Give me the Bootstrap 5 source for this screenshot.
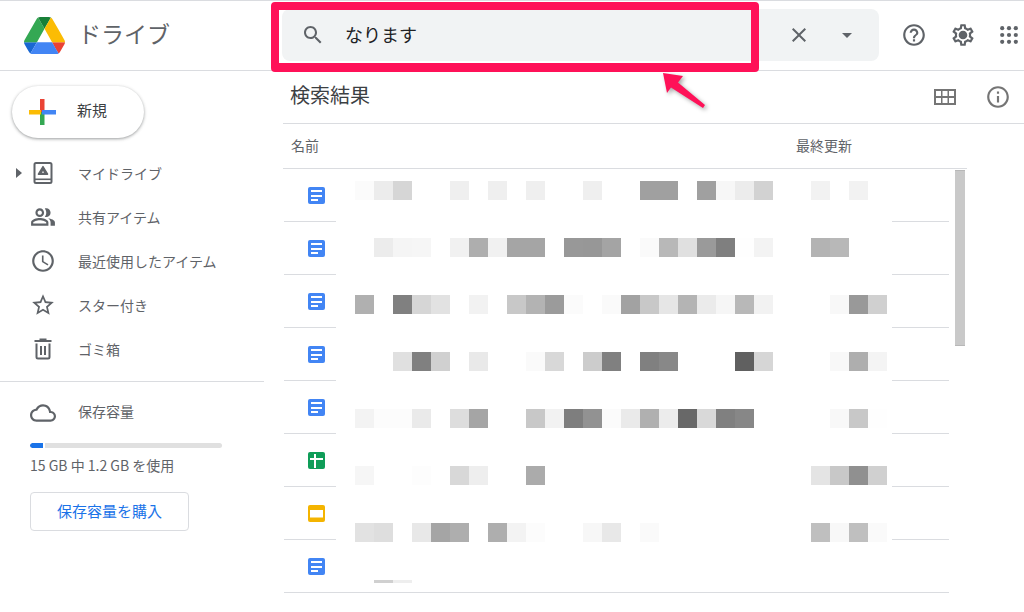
<!DOCTYPE html>
<html lang="ja">
<head>
  <meta charset="UTF-8" />
  <meta name="viewport" content="width=device-width, initial-scale=1.0"/>
  <title>ドライブ</title>
  <link href="https://cdn.jsdelivr.net/npm/bootstrap@5.3.0/dist/css/bootstrap.min.css" rel="stylesheet">
  <style>
    body { font-family: "Noto Sans CJK JP", "Liberation Sans", sans-serif; color: #5f6368; background: #fff; height: 612px; overflow: hidden; }
    svg { display: block; flex: none; }
    .ico { fill: #5f6368; }

    /* header */
    .top-bar { height: 71px; border-top: 1px solid #dadce0; border-bottom: 1px solid #dadce0; }
    .brand { width: 282px; padding-left: 24px; }
    .brand-name { font-size: 23px; margin: 0 0 4px 13px; line-height: 1; }
    .search-box { width: 597px; height: 52px; margin-bottom: 1px; background: #f1f3f4; border-radius: 8px; padding-left: 19px; }
    .search-text { font-size: 18px; color: #202124; margin: 0 0 3px 20px; line-height: 1; }
    .search-clear { margin-left: 370px; }
    .search-drop { margin-left: 24px; }
    .head-help { margin: 0 0 1px 22px; }
    .head-gear { margin: 0 0 1px 23px; }
    .head-apps { margin: 0 0 1px 24px; }

    /* sidebar */
    .side { width: 283px; flex: none; }
    .new-btn { width: 132px; height: 52px; margin: 15px 0 13px 12px; border-radius: 26px; padding-left: 16px; background: #fff; box-shadow: 0 1px 3px 1px rgba(60,64,67,.2), 0 1px 2px rgba(60,64,67,.25); font-size: 15px; color: #3c4043; }
    .new-btn span { margin: 0 0 3px 21px; }
    .side-row { height: 44px; font-size: 14px; position: relative; padding-left: 31px; }
    .side-row span { margin-left: 23px; }
    .side-row .wide-ico { margin: 0 -1px; }
    .tree-caret { position: absolute; left: 16px; top: 17px; width: 0; height: 0; border-left: 6px solid #5f6368; border-top: 5px solid transparent; border-bottom: 5px solid transparent; }
    .side-sep { width: 264px; margin-top: 10px; border-top: 1px solid #dadce0; }
    .store { padding: 18px 0 0 30px; font-size: 14px; }
    .store-title span { margin: 0 0 4px 22px; }
    .store-bar { width: 192px; height: 5px; margin-top: 17px; background: #e0e0e0; border-radius: 3px; overflow: hidden; }
    .store-fill { width: 15px; height: 100%; background: #1a73e8; border-right: 2px solid #fff; border-radius: 3px 0 0 3px; }
    .store-used { line-height: 20px; margin-top: 7px; }
    .buy-btn { width: 159px; height: 39px; margin-top: 17px; border: 1px solid #dadce0; border-radius: 4px; color: #1a73e8; font-size: 15px; padding: 0; background: #fff; }

    /* results */
    .results { width: 741px; flex: none; }
    .title-row { height: 53px; border-bottom: 1px solid #dadce0; padding-left: 7px; }
    .title-row h1 { font-size: 20px; font-weight: 400; color: #3c4043; margin: 0 0 4px; line-height: 1; }
    .grid-view { margin-left: 564px; }
    .info-btn { margin-left: 29px; }
    .col-row { width: 684px; height: 45px; border-bottom: 1px solid #dadce0; padding: 0 0 2px 8px; font-size: 14px; }
    .col-name { width: 505px; }
    .file-list { width: 666px; padding-left: 1px; }
    .file-row { height: 53px; border-bottom: 1px solid #dadce0; padding: 1px 0 0 24px; }
    .thumb { width: 10px; height: 176px; margin: 1px 0 0 6px; background: #c9c9c9; border-top: 1px solid #b8b8b8; border-bottom: 1px solid #b8b8b8; }
    .blur-cover { position: absolute; left: 53px; top: 0; width: 556px; height: 423px; background: #fff; padding: 12px 0 0 19px; display: grid; grid-template-columns: repeat(28, 19px); grid-template-rows: repeat(7, 19px) 3px; row-gap: 38px; }

    /* annotation */
    .mark-box { position: absolute; left: 271px; top: 2px; width: 488px; height: 70px; border: solid #ff1158; border-width: 8px 8px 9px; border-radius: 4px; }
    .mark-arrow { position: absolute; left: 655px; top: 68px; filter: drop-shadow(2px 2px 2px rgba(0,0,0,.35)); }
  </style>
</head>
<body class="position-relative">
  <header class="top-bar d-flex align-items-center">
    <div class="brand d-flex align-items-center">
      <svg width="41" height="37" viewBox="0 0 87.3 78" preserveAspectRatio="none">
        <path d="m6.6 66.85 3.85 6.65c.8 1.4 1.95 2.5 3.3 3.3l13.75-23.8h-27.5c0 1.55.4 3.1 1.2 4.5z" fill="#1967d2"/>
        <path d="m43.65 25-13.75-23.8c-1.35.8-2.5 1.9-3.3 3.3l-25.4 44a9.06 9.06 0 0 0 -1.2 4.5h27.5z" fill="#34a853"/>
        <path d="m73.55 76.8c1.35-.8 2.5-1.9 3.3-3.3l1.6-2.75 7.65-13.25c.8-1.4 1.2-2.95 1.2-4.5h-27.502l5.852 11.5z" fill="#ea4335"/>
        <path d="m43.65 25 13.75-23.8c-1.35-.8-2.9-1.2-4.5-1.2h-18.5c-1.6 0-3.15.45-4.5 1.2z" fill="#188038"/>
        <path d="m59.8 53h-32.3l-13.75 23.8c1.35.8 2.9 1.2 4.5 1.2h50.8c1.6 0 3.15-.45 4.5-1.2z" fill="#4285f4"/>
        <path d="m73.4 26.5-12.7-22c-.8-1.4-1.95-2.5-3.3-3.3l-13.75 23.8 16.15 28h27.45c0-1.55-.4-3.1-1.2-4.5z" fill="#fbbc04"/>
      </svg>
      <span class="brand-name">ドライブ</span>
    </div>
    <div class="search-box d-flex align-items-center">
      <svg class="ico" width="24" height="24" viewBox="0 0 24 24"><path d="M15.5 14h-.79l-.28-.27C15.41 12.59 16 11.11 16 9.5 16 5.91 13.09 3 9.5 3S3 5.91 3 9.5 5.91 16 9.5 16c1.61 0 3.09-.59 4.23-1.57l.27.28v.79l5 4.99L20.49 19l-4.99-5zm-6 0C7.01 14 5 11.99 5 9.5S7.01 5 9.5 5 14 7.01 14 9.5 11.99 14 9.5 14z"/></svg>
      <span class="search-text">なります</span>
      <svg class="ico search-clear" width="24" height="24" viewBox="0 0 24 24"><path d="M19 6.41L17.59 5 12 10.59 6.41 5 5 6.41 10.59 12 5 17.59 6.41 19 12 13.41 17.59 19 19 17.59 13.41 12z"/></svg>
      <svg class="ico search-drop" width="24" height="24" viewBox="0 0 24 24"><path d="M7 10l5 5 5-5z"/></svg>
    </div>
    <svg class="ico head-help" width="26" height="26" viewBox="0 0 24 24"><path d="M11 18h2v-2h-2v2zm1-16C6.48 2 2 6.48 2 12s4.48 10 10 10 10-4.48 10-10S17.52 2 12 2zm0 18c-4.41 0-8-3.59-8-8s3.59-8 8-8 8 3.59 8 8-3.59 8-8 8zm0-14c-2.21 0-4 1.79-4 4h2c0-1.1.9-2 2-2s2 .9 2 2c0 2-3 1.75-3 5h2c0-2.25 3-2.5 3-5 0-2.21-1.79-4-4-4z"/></svg>
    <svg class="ico head-gear" width="26" height="26" viewBox="0 0 24 24"><path d="M19.43 12.98c.04-.32.07-.64.07-.98 0-.34-.03-.66-.07-.98l2.11-1.65c.19-.15.24-.42.12-.64l-2-3.46c-.09-.16-.26-.25-.44-.25-.06 0-.12.01-.17.03l-2.49 1c-.52-.4-1.08-.73-1.69-.98l-.38-2.65C14.46 2.18 14.25 2 14 2h-4c-.25 0-.46.18-.49.42l-.38 2.65c-.61.25-1.17.59-1.69.98l-2.49-1c-.06-.02-.12-.03-.18-.03-.17 0-.34.09-.43.25l-2 3.46c-.13.22-.07.49.12.64l2.11 1.65c-.04.32-.07.65-.07.98 0 .33.03.66.07.98l-2.11 1.65c-.19.15-.24.42-.12.64l2 3.46c.09.16.26.25.44.25.06 0 .12-.01.17-.03l2.49-1c.52.4 1.08.73 1.69.98l.38 2.65c.03.24.24.42.49.42h4c.25 0 .46-.18.49-.42l.38-2.65c.61-.25 1.17-.59 1.69-.98l2.49 1c.06.02.12.03.18.03.17 0 .34-.09.43-.25l2-3.46c.12-.22.07-.49-.12-.64l-2.11-1.65zm-1.98-1.71c.04.31.05.52.05.73 0 .21-.02.43-.05.73l-.14 1.13.89.7 1.08.84-.7 1.21-1.27-.51-1.04-.42-.9.68c-.43.32-.84.56-1.25.73l-1.06.43-.16 1.13-.2 1.35h-1.4l-.19-1.35-.16-1.13-1.06-.43c-.43-.18-.83-.41-1.23-.71l-.91-.7-1.06.43-1.27.51-.7-1.21 1.08-.84.89-.7-.14-1.13c-.03-.31-.05-.54-.05-.74s.02-.43.05-.73l.14-1.13-.89-.7-1.08-.84.7-1.21 1.27.51 1.04.42.9-.68c.43-.32.84-.56 1.25-.73l1.06-.43.16-1.13.2-1.35h1.39l.19 1.35.16 1.13 1.06.43c.43.18.83.41 1.23.71l.91.7 1.06-.43 1.27-.51.7 1.21-1.07.85-.89.7.14 1.13zM12 8c-2.21 0-4 1.79-4 4s1.79 4 4 4 4-1.79 4-4-1.79-4-4-4z"/></svg>
    <svg class="ico head-apps" width="18" height="18" viewBox="0 0 18 18"><circle cx="2.2" cy="2.2" r="2.1"/><circle cx="9" cy="2.2" r="2.1"/><circle cx="15.8" cy="2.2" r="2.1"/><circle cx="2.2" cy="9" r="2.1"/><circle cx="9" cy="9" r="2.1"/><circle cx="15.8" cy="9" r="2.1"/><circle cx="2.2" cy="15.8" r="2.1"/><circle cx="9" cy="15.8" r="2.1"/><circle cx="15.8" cy="15.8" r="2.1"/></svg>
  </header>

  <div class="d-flex">
    <aside class="side">
      <button type="button" class="new-btn btn border-0 d-flex align-items-center">
        <svg width="28" height="28" viewBox="0 0 28 28">
          <rect x="12" y="1" width="4.5" height="13" fill="#ea4335"/>
          <rect x="12" y="14" width="4.5" height="13" fill="#34a853"/>
          <rect x="1" y="12" width="12" height="4.5" fill="#fbbc04"/>
          <rect x="14" y="12" width="14" height="4.5" fill="#4285f4"/>
        </svg>
        <span>新規</span>
      </button>
      <div class="side-row d-flex align-items-center">
        <i class="tree-caret"></i>
        <svg width="24" height="24" viewBox="0 0 24 24"><rect x="3.5" y="2" width="17" height="20" rx="1.5" fill="none" stroke="#5f6368" stroke-width="2"/><rect x="3" y="17.5" width="18" height="1.6" fill="#5f6368"/><path class="ico" d="M12 5.5l4.6 7.7H7.4z" stroke="#5f6368" stroke-width="1.4" stroke-linejoin="round"/><path d="M12 10l1.1 1.8h-2.2z" fill="#fff"/></svg>
        <span>マイドライブ</span>
      </div>
      <div class="side-row d-flex align-items-center">
        <svg class="ico wide-ico" width="26" height="26" viewBox="0 0 24 24"><path d="M16.67 13.13C18.04 14.06 19 15.32 19 17v3h4v-3c0-2.18-3.57-3.47-6.33-3.87z"/><path d="M15 12c2.21 0 4-1.79 4-4s-1.79-4-4-4c-.47 0-.91.1-1.33.24C14.5 5.27 15 6.58 15 8s-.5 2.73-1.33 3.76c.42.14.86.24 1.33.24z"/><path d="M9 12c2.21 0 4-1.79 4-4s-1.79-4-4-4-4 1.79-4 4 1.79 4 4 4zm0-6c1.1 0 2 .9 2 2s-.9 2-2 2-2-.9-2-2 .9-2 2-2z"/><path d="M9 13c-2.67 0-8 1.34-8 4v3h16v-3c0-2.66-5.33-4-8-4zm6 5H3v-.99C3.2 16.29 6.3 15 9 15s5.8 1.29 6 2v1z"/></svg>
        <span>共有アイテム</span>
      </div>
      <div class="side-row d-flex align-items-center">
        <svg class="ico wide-ico" width="26" height="26" viewBox="0 0 24 24"><path d="M11.99 2C6.47 2 2 6.48 2 12s4.47 10 9.99 10C17.52 22 22 17.52 22 12S17.52 2 11.99 2zM12 20c-4.42 0-8-3.58-8-8s3.58-8 8-8 8 3.58 8 8-3.58 8-8 8zm.5-13H11v6l5.25 3.15.75-1.23-4.5-2.67z"/></svg>
        <span>最近使用したアイテム</span>
      </div>
      <div class="side-row d-flex align-items-center">
        <svg class="ico wide-ico" width="26" height="26" viewBox="0 0 24 24"><path d="M22 9.24l-7.19-.62L12 2 9.19 8.63 2 9.24l5.46 4.73L5.82 21 12 17.27 18.18 21l-1.63-7.03L22 9.24zM12 15.4l-3.76 2.27 1-4.28-3.32-2.88 4.38-.38L12 6.1l1.71 4.04 4.38.38-3.32 2.88 1 4.28L12 15.4z"/></svg>
        <span>スター付き</span>
      </div>
      <div class="side-row d-flex align-items-center">
        <svg class="ico" width="24" height="24" viewBox="0 0 24 24"><path d="M8.5 1.5h7V3H20.5v2h-17V3H8.5zM4.5 6.5h15V20a2.5 2.5 0 0 1-2.5 2.5H7A2.5 2.5 0 0 1 4.5 20zm2 0V20a.5.5 0 0 0 .5.5h10a.5.5 0 0 0 .5-.5V6.5zM9 9h2v9H9zm4 0h2v9h-2z" fill-rule="evenodd"/></svg>
        <span>ゴミ箱</span>
      </div>
      <div class="side-sep"></div>
      <div class="store">
        <div class="store-title d-flex align-items-center">
          <svg class="ico" width="26" height="26" viewBox="0 0 24 24"><path d="M19.35 10.04C18.67 6.59 15.64 4 12 4 9.11 4 6.6 5.64 5.35 8.04 2.34 8.36 0 10.91 0 14c0 3.31 2.69 6 6 6h13c2.76 0 5-2.24 5-5 0-2.64-2.05-4.78-4.65-4.96zM19 18H6c-2.21 0-4-1.79-4-4 0-2.05 1.53-3.76 3.56-3.97l1.07-.11.5-.95C8.08 7.14 9.94 6 12 6c2.62 0 4.88 1.86 5.39 4.43l.3 1.5 1.53.11c1.56.1 2.78 1.41 2.78 2.96 0 1.65-1.35 3-3 3z"/></svg>
          <span>保存容量</span>
        </div>
        <div class="store-bar"><div class="store-fill"></div></div>
        <div class="store-used">15 GB 中 1.2 GB を使用</div>
        <button type="button" class="buy-btn btn">保存容量を購入</button>
      </div>
    </aside>

    <main class="results">
      <div class="title-row d-flex align-items-center">
        <h1>検索結果</h1>
        <svg class="grid-view" width="22" height="16" viewBox="0 0 22 16"><path fill="#757575" fill-rule="evenodd" d="M0 0h22v16H0zM2 2v5h5V2zm6.5 0v5h5V2zM15 2v5h5V2zM2 9v5h5V9zm6.5 0v5h5V9zM15 9v5h5V9z"/></svg>
        <svg class="info-btn" width="26" height="26" viewBox="0 0 24 24" fill="#757575"><path d="M11 7h2v2h-2zm0 4h2v6h-2zm1-9C6.48 2 2 6.48 2 12s4.48 10 10 10 10-4.48 10-10S17.52 2 12 2zm0 18c-4.41 0-8-3.59-8-8s3.59-8 8-8 8 3.59 8 8-3.59 8-8 8z"/></svg>
      </div>
      <div class="col-row d-flex align-items-center">
        <div class="col-name">名前</div>
        <div>最終更新</div>
      </div>
      <div class="d-flex position-relative">
        <div class="file-list" id="fileList"></div>
        <div class="thumb"></div>
        <div class="blur-cover" id="blurCover"></div>
      </div>
    </main>
  </div>

  <div class="mark-box"></div>
  <svg class="mark-arrow" width="55" height="48" viewBox="0 0 55 48"><path d="M8 5L28 8 23 14.5 50 37 48 40 16 19.5 12 25z" fill="#ff1158"/></svg>

  <script>
    const icons = {
      doc: '<rect width="17" height="17" rx="2" fill="#4285f4"/><path d="M3 3h11v2H3zM3 8h11v2H3zM3 12h7v2H3z" fill="#fff"/>',
      sheet: '<rect width="17" height="17" rx="2" fill="#0f9d58"/><path d="M2 6h13v2H8v8H6V8H2z M6 2h2v4H6z" fill="#fff"/>',
      slide: '<rect width="17" height="17" rx="2" fill="#f4b400"/><rect x="2" y="5" width="13" height="7.5" fill="#fff"/>'
    };
    const files = ["doc", "doc", "doc", "doc", "doc", "sheet", "slide", "doc"];
    document.getElementById("fileList").innerHTML = files.map(function(f) {
      return '<div class="file-row d-flex align-items-center"><svg width="17" height="17" viewBox="0 0 17 17">' + icons[f] + '</svg></div>';
    }).join("");

    // pixelated filenames and dates, one grey value per block ("--" is white)
    const blurRows = [
      "fb ec d6 -- -- ef -- ef -- ef -- -- ef -- -- a0 a0 -- a0 f7 ec d2 -- -- f2 -- f2 --",
      "-- ec f5 f6 -- f1 ae f1 a5 a5 -- 98 97 a4 -- fa b8 e0 9a 7f fe f3 -- -- b3 b8 -- --",
      "b0 -- 80 d6 e2 -- f2 -- c8 b3 9b fb -- fa a2 c8 e6 b4 eb f6 b8 f2 -- -- -- f8 99 d0",
      "-- -- e0 80 d0 -- e9 -- -- fa d8 -- cc 80 -- 80 88 -- -- -- 60 d6 -- -- -- f8 ae f4",
      "f3 fc fc ea -- dd a5 -- -- c8 f2 7e 92 fb ea b0 ec 68 d9 80 87 -- -- -- -- f8 c8 fe",
      "f6 -- -- fd -- d8 ee -- -- ab -- -- -- -- -- -- -- -- -- -- -- -- -- -- e4 c8 90 d0",
      "e2 de -- e8 a5 ae -- ae f3 fc -- -- f7 e8 -- fa -- -- -- -- -- -- -- -- bf f8 bf fa",
      "-- d0 ee -- -- -- -- -- -- -- -- -- -- -- -- -- -- -- -- -- -- -- -- -- -- -- -- --"
    ];
    const cover = document.getElementById("blurCover");
    blurRows.forEach(function(row) {
      row.split(" ").forEach(function(v) {
        const cell = document.createElement("div");
        if (v !== "--") cell.style.background = "#" + v + v + v;
        cover.appendChild(cell);
      });
    });
  </script>
  <script src="https://cdn.jsdelivr.net/npm/bootstrap@5.3.0/dist/js/bootstrap.bundle.min.js"></script>
</body>
</html>
